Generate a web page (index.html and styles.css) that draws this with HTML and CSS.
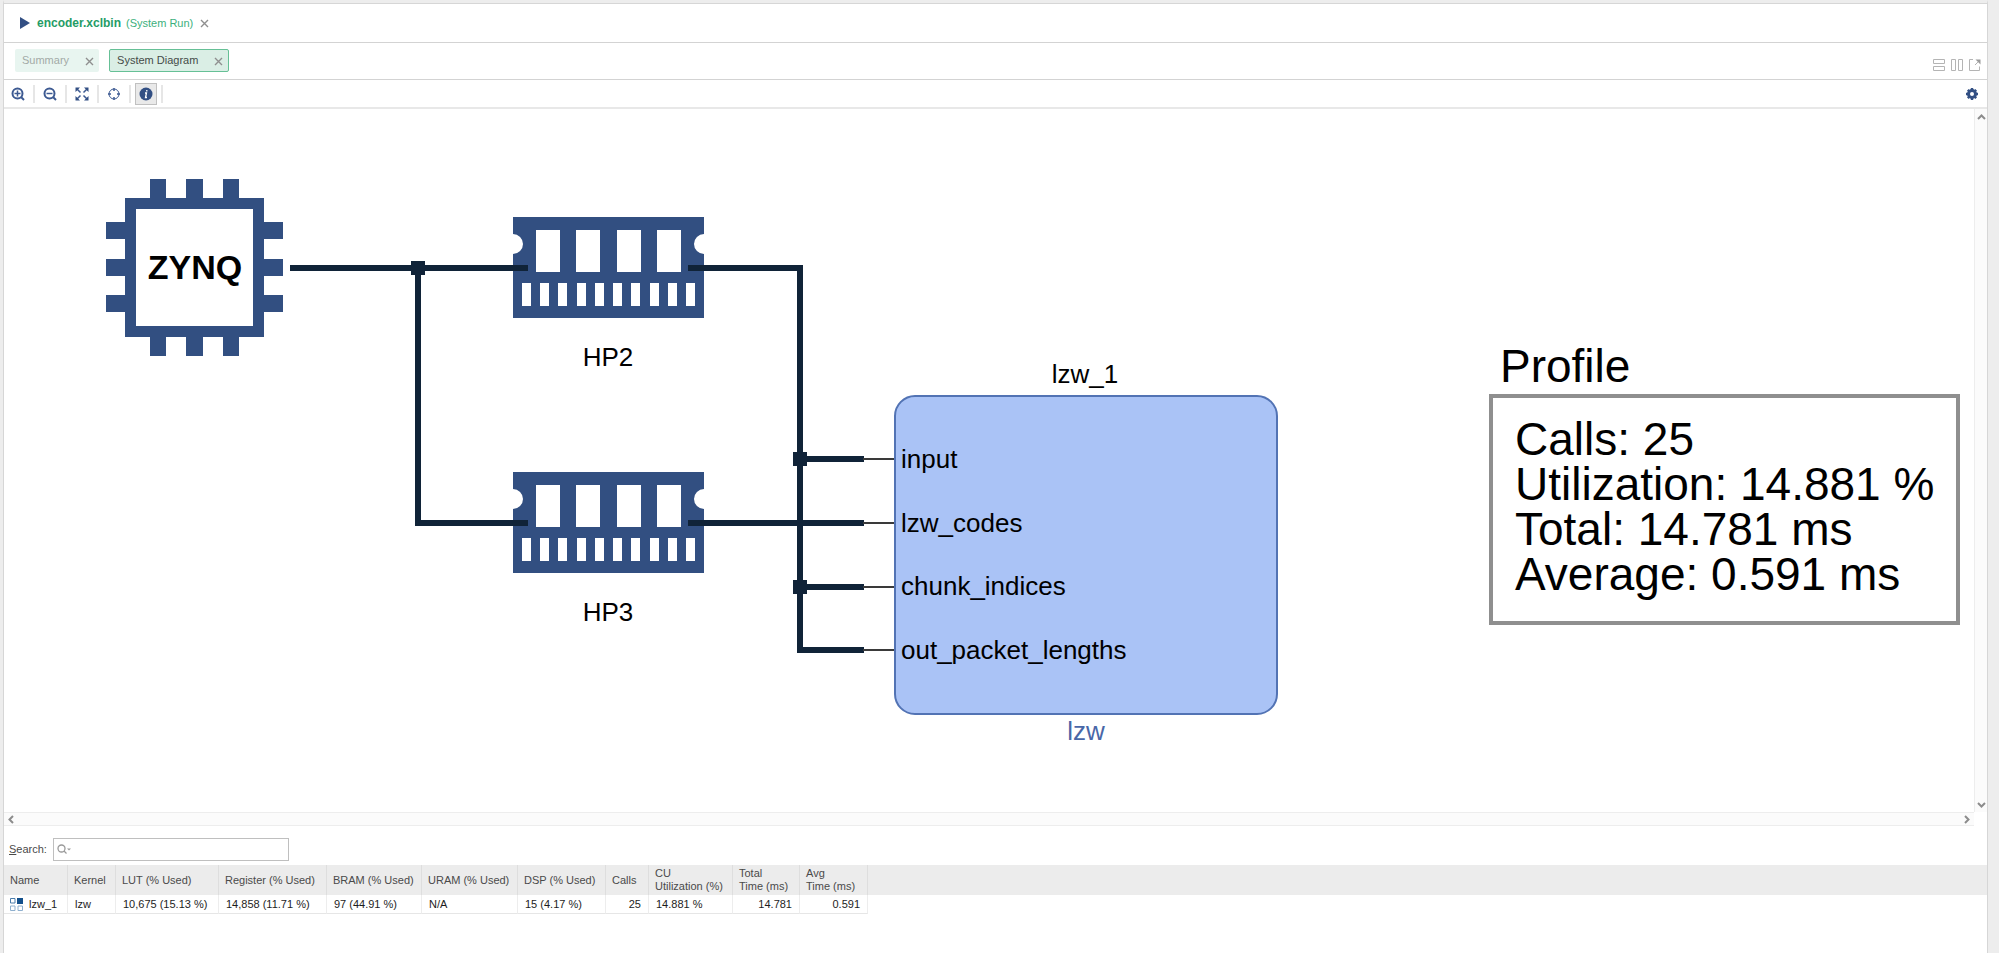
FILE: index.html
```html
<!DOCTYPE html>
<html lang="en">
<head>
<meta charset="utf-8">
<title>encoder.xclbin - System Diagram</title>
<link rel="stylesheet" href="styles.css">
</head>
<body>
<main class="panel">
  <header class="run-bar">
    <svg class="play" width="10" height="14" viewBox="0 0 10 14" aria-hidden="true"><path d="M0 1v12l10-6z"/></svg>
    <strong class="run-name">encoder.xclbin</strong>
    <span class="run-kind">(System Run)</span>
    <button class="close" aria-label="Close run"><svg width="7" height="7" viewBox="0 0 7 7"><path d="M0 0l7 7M7 0l-7 7"/></svg></button>
  </header>

  <nav class="tab-bar">
    <div class="tab">
      <a class="tab-label" href="#summary">Summary</a>
      <button class="close" aria-label="Close Summary"><svg width="7" height="7" viewBox="0 0 7 7"><path d="M0 0l7 7M7 0l-7 7"/></svg></button>
    </div>
    <div class="tab tab-active">
      <a class="tab-label" href="#diagram">System Diagram</a>
      <button class="close" aria-label="Close System Diagram"><svg width="7" height="7" viewBox="0 0 7 7"><path d="M0 0l7 7M7 0l-7 7"/></svg></button>
    </div>
    <div class="window-tools">
      <button aria-label="Split horizontally"><svg width="12" height="12" viewBox="0 0 12 12"><path d="M.5.5h11v4h-11zM.5 7.500h11v4h-11z"/></svg></button>
      <button aria-label="Split vertically"><svg width="12" height="12" viewBox="0 0 12 12"><path d="M.5.5h4v11h-4zM7.500.5h4v11h-4z"/></svg></button>
      <button aria-label="Float"><svg width="12" height="12" viewBox="0 0 12 12"><path d="M4 .5h-3.500v11h10v-4M6 6l4-4"/><path class="solid" d="M6.500 0.500h5v5z"/></svg></button>
    </div>
  </nav>

  <div class="toolbar">
    <button class="tool" aria-label="Zoom in"><svg width="14" height="14" viewBox="0 0 14 14"><circle cx="6.500" cy="6.500" r="5"/><path d="M10 10l3 3"/><path class="fine" d="M3.500 6.500h6M6.500 3.500v6"/></svg></button>
    <span class="sep"></span>
    <button class="tool" aria-label="Zoom out"><svg width="14" height="14" viewBox="0 0 14 14"><circle cx="6.500" cy="6.500" r="5"/><path d="M10 10l3 3"/><path class="fine" d="M3.500 6.500h6"/></svg></button>
    <span class="sep"></span>
    <button class="tool" aria-label="Zoom fit"><svg width="14" height="14" viewBox="0 0 14 14"><path class="fine" d="M2 2l3.500 3.500M12 2L8.500 5.500M2 12l3.500-3.500M12 12L8.500 8.500"/><path class="solid" d="M.5.5h4.500l-4.500 4.500zM13.500.5v4.500L9 .5zM.5 13.500V9L5 13.500zM13.500 13.500H9L13.500 9z"/></svg></button>
    <span class="sep"></span>
    <button class="tool" aria-label="Auto fit selection"><svg width="14" height="14" viewBox="0 0 14 14"><circle class="thin" cx="7" cy="7" r="5"/><path class="fine" d="M7 1v3M7 10v3M1 7h3M10 7h3"/></svg></button>
    <span class="sep"></span>
    <button class="tool tool-on" aria-label="Show profile information" aria-pressed="true"><svg width="14" height="14" viewBox="0 0 14 14"><circle class="solid" cx="7" cy="7" r="6.500"/><path class="mark" d="M6 6h1.500L6.500 10.500h1.500M7.800 3v1.500"/></svg></button>
    <span class="sep"></span>
    <button class="tool tool-settings" aria-label="Settings"><svg width="14" height="14" viewBox="0 0 14 14"><circle class="ring" cx="7" cy="7" r="3.500"/><path class="teeth" d="M7 1v2M7 11v2M1 7h2M11 7h2M2.800 2.800l1.200 1.200M10 10l1.200 1.200M2.800 11.200l1.200-1.200M10 4l1.200-1.200"/></svg></button>
  </div>

  <section class="viewer" id="diagram">
    <div class="canvas">
      <svg class="diagram" width="1970" height="703" viewBox="0 0 1970 703" role="img" aria-label="System diagram">
        <defs>
          <g id="memory">
            <path fill-rule="evenodd" d="M0 0h191v17a10 10 0 0 0 0 20v64H0V37a10 10 0 0 0 0-20z
              M23 13v42h24V13zM63 13v42h24V13zM104 13v42h24V13zM144 13v42h24V13z
              M9 66v23h9V66zM27 66v23h9V66zM45 66v23h9V66zM64 66v23h9V66zM82 66v23h9V66z
              M100 66v23h9V66zM118 66v23h9V66zM137 66v23h9V66zM155 66v23h9V66zM173 66v23h9V66z"/>
          </g>
        </defs>

        <g class="part">
          <path fill-rule="evenodd" d="M121 89h139v139h-139zM132 100v117h117v-117z"/>
          <path d="M146 70h16v20h-16zM182 70h17v20h-17zM219 70h16v20h-16z
            M146 227h16v20h-16zM182 227h17v20h-17zM219 227h16v20h-16z
            M102 113h20v17h-20zM102 150h20v17h-20zM102 186h20v17h-20z
            M259 113h20v17h-20zM259 150h20v17h-20zM259 186h20v17h-20z"/>
          <use href="#memory" x="509" y="108"/>
          <use href="#memory" x="509" y="363"/>
        </g>
        <text class="chip-name" x="191" y="170">ZYNQ</text>

        <g class="wire">
          <path d="M286 159h238M414 159v255h110M684 159h112v382h64M796 350h64M684 414h176M796 478h64"/>
        </g>
        <g class="joint">
          <rect x="407" y="152" width="14" height="14"/>
          <rect x="789" y="343" width="14" height="14"/>
          <rect x="789" y="471" width="14" height="14"/>
        </g>
        <path class="pin" d="M859 350h32M859 414h32M859 478h32M859 541h32"/>

        <text class="label center" x="604" y="257">HP2</text>
        <text class="label center" x="604" y="512">HP3</text>

        <rect class="kernel" x="891" y="287" width="382" height="318" rx="20"/>
        <text class="label center" x="1081" y="274">lzw_1</text>
        <text class="label" x="897" y="359">input</text>
        <text class="label" x="897" y="423">lzw_codes</text>
        <text class="label" x="897" y="486">chunk_indices</text>
        <text class="label" x="897" y="550">out_packet_lengths</text>
        <text class="label center kernel-type" x="1082" y="631">lzw</text>
      </svg>
      <aside class="profile">
        <h2>Profile</h2>
        <div class="profile-box">
          <p>Calls: 25</p>
          <p>Utilization: 14.881 %</p>
          <p>Total: 14.781 ms</p>
          <p>Average: 0.591 ms</p>
        </div>
      </aside>
    </div>
    <div class="scroll scroll-y">
      <button aria-label="Scroll up"><svg width="9" height="6" viewBox="0 0 9 6"><path d="M1 5l3.500-3.500L8 5"/></svg></button>
      <button aria-label="Scroll down"><svg width="9" height="6" viewBox="0 0 9 6"><path d="M1 1l3.500 3.500L8 1"/></svg></button>
    </div>
    <div class="scroll scroll-x">
      <button aria-label="Scroll left"><svg width="6" height="9" viewBox="0 0 6 9"><path d="M5 1L1.500 4.500L5 8"/></svg></button>
      <button aria-label="Scroll right"><svg width="6" height="9" viewBox="0 0 6 9"><path d="M1 1l3.500 3.500L1 8"/></svg></button>
    </div>
  </section>

  <section class="results">
    <div class="search-row">
      <label for="search"><u>S</u>earch:</label>
      <div class="search-box">
        <svg width="14" height="11" viewBox="0 0 14 11" aria-hidden="true"><circle cx="4.500" cy="4.500" r="3.500"/><path d="M7 7l2.500 2.500"/><path class="arrow" d="M10 4.500h4l-2 2z"/></svg>
        <input id="search" type="text">
      </div>
    </div>
    <table class="grid">
      <colgroup>
        <col class="c-name"><col class="c-kernel"><col class="c-lut"><col class="c-reg"><col class="c-bram"><col class="c-uram">
        <col class="c-dsp"><col class="c-calls"><col class="c-util"><col class="c-total"><col class="c-avg"><col>
      </colgroup>
      <thead>
        <tr>
          <th>Name</th><th>Kernel</th><th>LUT (% Used)</th><th>Register (% Used)</th><th>BRAM (% Used)</th><th>URAM (% Used)</th>
          <th>DSP (% Used)</th><th>Calls</th><th>CU<br>Utilization (%)</th><th>Total<br>Time (ms)</th><th>Avg<br>Time (ms)</th><td class="rest"></td>
        </tr>
      </thead>
      <tbody>
        <tr>
          <td><span class="unit"><svg width="13" height="13" viewBox="0 0 13 13" aria-hidden="true"><path class="on" d="M7 0h6v6H7z"/><path class="off" d="M.5.5h4.500v4.500H.5z"/><path class="off light" d="M.5 8h4.500v4.500H.5zM8 8h4.500v4.500H8z"/></svg>lzw_1</span></td>
          <td>lzw</td><td>10,675 (15.13 %)</td><td>14,858 (11.71 %)</td><td>97 (44.91 %)</td><td>N/A</td>
          <td>15 (4.17 %)</td><td class="num">25</td><td>14.881 %</td><td class="num">14.781</td><td class="num">0.591</td><td class="rest"></td>
        </tr>
      </tbody>
    </table>
  </section>
</main>
</body>
</html>
```
FILE: styles.css
```css
* { box-sizing: border-box; }

body {
  margin: 0;
  background: #ededed;
  color: #4a4a4a;
  font: 11px/13px "Liberation Sans", Arial, sans-serif;
}

button {
  display: flex;
  align-items: center;
  justify-content: center;
  margin: 0;
  padding: 0;
  border: 0;
  background: none;
}

.panel {
  display: flex;
  flex-direction: column;
  min-height: 100vh;
  padding-top: 1px;
  background: #fff;
  border: solid #d6d6d6;
  border-width: 0 1px;
  margin: 0 11px 0 3px;
  border-top: 3px solid #ededed;
  box-shadow: inset 0 1px #d6d6d6;
}

/* run title */
.run-bar {
  display: flex;
  align-items: center;
  height: 39px;
  padding-left: 16px;
  border-bottom: 1px solid #d3d3d3;
  color: #3cb07c;
}
.play { margin-right: 7px; fill: #324f83; }
.run-name { margin-right: 5px; color: #259c66; font-size: 12px; }
.close { margin-left: 8px; }
.close svg { overflow: visible; fill: none; stroke: #8f8f8f; stroke-width: 1.4; }

/* view tabs */
.tab-bar {
  display: flex;
  gap: 10px;
  height: 37px;
  padding: 6px 6px 0 11px;
  border-bottom: 1px solid #d3d3d3;
}
.tab {
  display: flex;
  align-items: center;
  height: 23px;
  padding: 0 6px 0 7px;
  border-radius: 2px;
  background: #e8f5f0;
}
.tab-label { color: #a3aaa7; text-decoration: none; }
.tab .close { margin: 1px 0 0 17px; }
.tab-active { border: 1px solid #66c096; background: #daeee5; }
.tab-active .tab-label { color: #454b48; }
.window-tools { display: flex; gap: 6px; align-items: center; height: 22px; margin: 5px 0 0 auto; }
.window-tools svg { fill: none; stroke: #b4b4b4; }
.window-tools .solid { fill: #9a9a9a; stroke: none; }

/* diagram tools */
.toolbar {
  display: flex;
  align-items: center;
  gap: 4px;
  height: 29px;
  padding: 0 4px 0 3px;
  border-bottom: 2px solid #e8e8e8;
}
.tool { width: 22px; height: 22px; }
.tool svg { fill: none; stroke: #3d5a92; stroke-width: 2; }
.tool .fine { stroke-width: 1.5; }
.tool .thin { stroke-width: 1; }
.tool .solid { fill: #324f83; stroke: none; }
.tool .mark { stroke: #fff; stroke-width: 1.3; }
.tool .ring { stroke: #324f83; stroke-width: 3; }
.tool .teeth { stroke: #324f83; stroke-width: 2.4; }
.tool-on { border: 1px solid #c0c0c0; background: #e9e9e9; }
.tool-settings { margin-left: auto; }
.sep { width: 2px; height: 18px; background: #e6e6e6; }

/* diagram */
.viewer {
  display: grid;
  flex: 1;
  grid-template: 1fr 14px / 1fr 13px;
  min-height: 300px;
}
.canvas { position: relative; min-width: 0; overflow: hidden; }
.diagram { display: block; }
.part { fill: #324f81; }
.wire { fill: none; stroke: #102338; stroke-width: 6; }
.joint { fill: #102338; }
.pin { fill: none; stroke: #3a3a3a; stroke-width: 2; }
.kernel { fill: #aac3f6; stroke: #5273b4; stroke-width: 2; }
.label { font-size: 26px; }
.center, .chip-name { text-anchor: middle; }
.kernel-type { fill: #4967a8; }
.chip-name { font-size: 34px; font-weight: bold; }

/* profile node on the free canvas */
.profile {
  position: absolute;
  top: 235px;
  left: 1485px;
  width: 471px;
  color: #000;
  font-size: 46px;
  line-height: 45px;
  white-space: nowrap;
}
.profile h2 { margin: 0 0 5px; padding-left: 11px; font-size: inherit; font-weight: normal; }
.profile p { margin: 0; }
.profile-box { padding: 19px 0 24px 22px; border: 4px solid #8f8f8f; }

.scroll { display: flex; justify-content: space-between; background: #fbfbfb; }
.scroll svg { fill: none; stroke: #8c8c8c; stroke-width: 2; }
.scroll-y { flex-direction: column; padding: 5px 0 4px; border-left: 1px solid #ededed; }
.scroll-x { padding: 0 4px; border: solid #ededed; border-width: 1px 0; }

/* kernel table */
.results { min-height: 127px; }
.search-row { display: flex; align-items: center; gap: 6px; padding: 12px 5px 4px; }
.search-box {
  display: flex;
  align-items: center;
  width: 236px;
  height: 23px;
  padding: 0 3px;
  border: 1px solid #bfbfbf;
}
.search-box svg { flex: none; fill: none; stroke: #9a9a9a; stroke-width: 1.3; }
.search-box .arrow { fill: #9a9a9a; stroke: none; }
.search-box input { flex: 1; min-width: 0; height: 100%; border: 0; outline: 0; background: none; font: inherit; }

.grid { width: 100%; border-collapse: separate; border-spacing: 0; table-layout: fixed; }
.grid thead tr { height: 30px; background: #ececec; }
.grid tbody tr { height: 19px; color: #1d1d1d; }
.grid th, .grid td {
  border-right: 1px solid #dedede;
  white-space: nowrap;
}
.grid th { padding: 0 0 0 6px; font-weight: normal; text-align: left; }
.grid td { padding: 0 0 0 7px; }
.grid td:first-child { padding-left: 6px; }
.grid tbody td { border-bottom: 1px solid #e6e6e6; border-right-color: #ededed; }
.grid .num { padding: 0 7px 0 0; text-align: right; }
.grid tr .rest { border: 0; }
.unit { display: flex; align-items: center; gap: 6px; }
.unit .on { fill: #13508c; }
.unit .off { fill: none; stroke: #4a7cac; }
.unit .light { stroke: #8fb0cf; }
.c-name { width: 64px; }
.c-kernel { width: 48px; }
.c-lut { width: 103px; }
.c-reg { width: 108px; }
.c-bram { width: 95px; }
.c-uram { width: 96px; }
.c-dsp { width: 88px; }
.c-calls { width: 43px; }
.c-util { width: 84px; }
.c-total { width: 67px; }
.c-avg { width: 68px; }
```
